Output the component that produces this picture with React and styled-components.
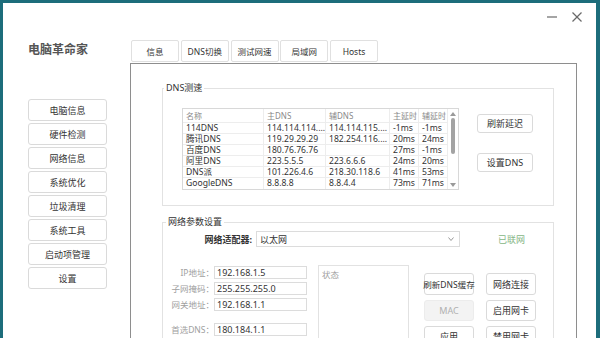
import React from "react";
import styled, { createGlobalStyle } from "styled-components";

const Global = createGlobalStyle`
  html, body { margin: 0; padding: 0; }
  body {
    background: #1d6d7b;
    overflow: hidden;
    font-family: "Noto Sans", "Noto Sans CJK SC", sans-serif;
    color: #333;
  }
  * { box-sizing: border-box; }
`;

const Window = styled.div`
  margin: 3px 0 0 3px;
  width: 593px;
  height: 335px;
  background: #fff;
  display: flex;
  flex-direction: column;
  overflow: hidden;
`;

const TitleBar = styled.div`
  height: 37px;
  flex: none;
  display: flex;
  justify-content: flex-end;
  align-items: flex-start;
  padding: 9px 14px 0 0;
  gap: 15px;
`;

const Ctrl = styled.svg`
  width: 10px;
  height: 10px;
  stroke: #6a6a6a;
  stroke-width: 1.2;
  fill: none;
`;

const Body = styled.div`
  display: flex;
  flex: 1;
  min-height: 0;
`;

const Sidebar = styled.div`
  width: 127px;
  flex: none;
  padding: 3px 0 0 25px;
  display: flex;
  flex-direction: column;
`;

const AppTitle = styled.div`
  font-size: 12px;
  line-height: 14px;
  font-weight: bold;
  color: #555;
`;

const NavList = styled.div`
  margin-top: 42px;
  display: flex;
  flex-direction: column;
  gap: 2px;
`;

const Btn = styled.div`
  display: flex;
  align-items: center;
  justify-content: center;
  width: ${(p) => p.$w || 79}px;
  height: ${(p) => p.$h || 22}px;
  border: 1px solid ${(p) => (p.$disabled ? "#ececec" : "#dadada")};
  border-radius: 3px;
  background: ${(p) => (p.$disabled ? "#f3f3f3" : "#fff")};
  color: ${(p) => (p.$disabled ? "#b0b0b0" : "#333")};
  font-size: ${(p) => p.$fs || 9}px;
  white-space: nowrap;
`;

const Main = styled.div`
  width: 447px;
  flex: none;
  display: flex;
  flex-direction: column;
`;

const Tabs = styled.div`
  display: flex;
  gap: 1.75px;
  margin-left: 1px;
  height: 22px;
`;

const Tab = styled.div`
  width: 48px;
  height: 22px;
  border: 1px solid #e0e0e0;
  border-radius: 2px;
  display: flex;
  align-items: center;
  justify-content: center;
  font-size: 8.5px;
  color: #333;
`;

const Panel = styled.div`
  margin-top: 1px;
  height: 300px;
  border: 1px solid #8e8e8e;
  padding: 18px 0 0 31px;
`;

const Group = styled.fieldset`
  margin: ${(p) => p.$mt || 0}px 0 0 0;
  padding: 0;
  width: 392px;
  height: ${(p) => p.$h}px;
  border: 1px solid #e2e2e2;
  min-width: 0;
`;

const Legend = styled.legend`
  font-size: 9px;
  line-height: 12px;
  padding: 0 2px;
  margin-left: ${(p) => p.$ml || 1}px;
  color: #333;
`;

const DnsInner = styled.div`
  display: flex;
  padding: 14px 0 0 19px;
  gap: 18px;
`;

const TableBox = styled.div`
  width: 277px;
  height: 82px;
  border: 1px solid #d8d8d8;
  display: flex;
`;

const TableGrid = styled.div`
  flex: 1;
  display: flex;
  flex-direction: column;
`;

const Row = styled.div`
  display: grid;
  grid-template-columns: 81px 62px 64px 29px 29px;
  height: ${(p) => (p.$head ? 14 : 11)}px;
  border-bottom: 1px solid #ededed;
  &:last-child { border-bottom: none; }
`;

const Cell = styled.div`
  font-size: ${(p) => (p.$head ? 8 : 8.6)}px;
  line-height: ${(p) => (p.$head ? 13 : 10)}px;
  padding-left: 3px;
  color: ${(p) => (p.$head ? "#8a8a8a" : "#333")};
  border-right: 1px solid #ededed;
  white-space: nowrap;
  overflow: hidden;
  text-overflow: ${(p) => (p.$head ? "clip" : "ellipsis")};
`;

const ScrollBar = styled.div`
  width: 10px;
  flex: none;
  display: flex;
  flex-direction: column;
  align-items: center;
  padding: 3px 0 2px;
`;

const Thumb = styled.div`
  width: 4px;
  height: 36px;
  margin-top: 2px;
  border-radius: 2px;
  background: #a3a3a3;
`;

const Arrow = styled.svg`
  width: 6px;
  height: 4px;
  fill: #9a9a9a;
  flex: none;
`;

const Spacer = styled.div`
  flex: 1;
`;

const DnsButtons = styled.div`
  display: flex;
  flex-direction: column;
  gap: 20px;
  margin-top: 6px;
`;

const NetInner = styled.div`
  padding: 3px 0 0 0;
`;

const AdapterRow = styled.div`
  display: flex;
  align-items: center;
  height: 16px;
`;

const AdapterLabel = styled.div`
  width: 89px;
  text-align: right;
  font-size: 9px;
  font-weight: bold;
  color: #333;
`;

const Select = styled.div`
  margin-left: 4px;
  width: 204px;
  height: 16px;
  border: 1px solid #dcdcdc;
  display: flex;
  align-items: center;
  justify-content: space-between;
  padding: 0 5px 0 3px;
  font-size: 9px;
  color: #333;
`;

const Chevron = styled.svg`
  width: 6px;
  height: 4px;
  stroke: #999;
  stroke-width: 1;
  fill: none;
`;

const Connected = styled.div`
  margin-left: 38px;
  font-size: 9px;
  color: #86b686;
`;

const Lower = styled.div`
  display: flex;
  margin-top: 18px;
`;

const Fields = styled.div`
  width: 144px;
  flex: none;
  display: flex;
  flex-direction: column;
  padding-top: 1px;
`;

const FieldRow = styled.div`
  display: flex;
  align-items: center;
  height: 12px;
  margin-top: ${(p) => p.$mt || 0}px;
`;

const FieldLabel = styled.div`
  width: 51px;
  text-align: right;
  font-size: 8.5px;
  color: #a0a0a0;
  white-space: nowrap;
`;

const FieldInput = styled.div`
  width: 93px;
  height: 13px;
  border: 1px solid #dcdcdc;
  font-size: 9px;
  line-height: 11px;
  padding-left: 2px;
  color: #333;
`;

const StatusBox = styled.div`
  margin-left: 11px;
  width: 91px;
  height: 80px;
  border: 1px solid #e2e2e2;
  padding: 2px 3px;
  font-size: 8.5px;
  color: #a0a0a0;
`;

const ActionGrid = styled.div`
  margin-left: 15px;
  margin-top: 8px;
  display: grid;
  grid-template-columns: 50px 50px;
  column-gap: 12px;
  row-gap: 5px;
  align-content: start;
`;

const dnsRows = [
  ["114DNS", "114.114.114.114", "114.114.115.115", "-1ms", "-1ms"],
  ["腾讯DNS", "119.29.29.29", "182.254.116.116", "20ms", "24ms"],
  ["百度DNS", "180.76.76.76", "", "27ms", "-1ms"],
  ["阿里DNS", "223.5.5.5", "223.6.6.6", "24ms", "20ms"],
  ["DNS派", "101.226.4.6", "218.30.118.6", "41ms", "53ms"],
  ["GoogleDNS", "8.8.8.8", "8.8.4.4", "73ms", "71ms"],
];

const nav = ["电脑信息", "硬件检测", "网络信息", "系统优化", "垃圾清理", "系统工具", "启动项管理", "设置"];
const tabs = ["信息", "DNS切换", "测试网速", "局域网", "Hosts"];

export default function App() {
  return (
    <>
      <Global />
      <Window>
        <TitleBar>
          <Ctrl viewBox="0 0 10 10">
            <line x1="0" y1="5" x2="10" y2="5" />
          </Ctrl>
          <Ctrl viewBox="0 0 10 10">
            <line x1="0.5" y1="0.5" x2="9.5" y2="9.5" />
            <line x1="9.5" y1="0.5" x2="0.5" y2="9.5" />
          </Ctrl>
        </TitleBar>
        <Body>
          <Sidebar>
            <AppTitle>电脑革命家</AppTitle>
            <NavList>
              {nav.map((n) => (
                <Btn key={n}>{n}</Btn>
              ))}
            </NavList>
          </Sidebar>
          <Main>
            <Tabs>
              {tabs.map((t) => (
                <Tab key={t}>{t}</Tab>
              ))}
            </Tabs>
            <Panel>
              <Group $h={124}>
                <Legend>DNS测速</Legend>
                <DnsInner>
                  <TableBox>
                    <TableGrid>
                      <Row $head>
                        {["名称", "主DNS", "辅DNS", "主延时", "辅延时"].map((h) => (
                          <Cell $head key={h}>{h}</Cell>
                        ))}
                      </Row>
                      {dnsRows.map((r) => (
                        <Row key={r[0]}>
                          {r.map((c, i) => (
                            <Cell key={i}>{c}</Cell>
                          ))}
                        </Row>
                      ))}
                    </TableGrid>
                    <ScrollBar>
                      <Arrow viewBox="0 0 6 4">
                        <polygon points="3,0 6,4 0,4" />
                      </Arrow>
                      <Thumb />
                      <Spacer />
                      <Arrow viewBox="0 0 6 4">
                        <polygon points="0,0 6,0 3,4" />
                      </Arrow>
                    </ScrollBar>
                  </TableBox>
                  <DnsButtons>
                    <Btn $w={56} $h={19}>刷新延迟</Btn>
                    <Btn $w={56} $h={19}>设置DNS</Btn>
                  </DnsButtons>
                </DnsInner>
              </Group>
              <Group $mt={10} $h={140}>
                <Legend $ml={3}>网络参数设置</Legend>
                <NetInner>
                  <AdapterRow>
                    <AdapterLabel>网络适配器:</AdapterLabel>
                    <Select>
                      以太网
                      <Chevron viewBox="0 0 6 4">
                        <polyline points="0.5,0.5 3,3.5 5.5,0.5" />
                      </Chevron>
                    </Select>
                    <Connected>已联网</Connected>
                  </AdapterRow>
                  <Lower>
                    <Fields>
                      <FieldRow>
                        <FieldLabel>IP地址：</FieldLabel>
                        <FieldInput>192.168.1.5</FieldInput>
                      </FieldRow>
                      <FieldRow $mt={4}>
                        <FieldLabel>子网掩码：</FieldLabel>
                        <FieldInput>255.255.255.0</FieldInput>
                      </FieldRow>
                      <FieldRow $mt={4}>
                        <FieldLabel>网关地址：</FieldLabel>
                        <FieldInput>192.168.1.1</FieldInput>
                      </FieldRow>
                      <FieldRow $mt={13}>
                        <FieldLabel>首选DNS：</FieldLabel>
                        <FieldInput>180.184.1.1</FieldInput>
                      </FieldRow>
                    </Fields>
                    <StatusBox>状态</StatusBox>
                    <ActionGrid>
                      <Btn $w={50} $h={22} $fs={8.5}>刷新DNS缓存</Btn>
                      <Btn $w={50} $h={22}>网络连接</Btn>
                      <Btn $w={50} $h={21} $disabled>MAC</Btn>
                      <Btn $w={50} $h={21}>启用网卡</Btn>
                      <Btn $w={50} $h={21}>应用</Btn>
                      <Btn $w={50} $h={21}>禁用网卡</Btn>
                    </ActionGrid>
                  </Lower>
                </NetInner>
              </Group>
            </Panel>
          </Main>
        </Body>
      </Window>
    </>
  );
}
